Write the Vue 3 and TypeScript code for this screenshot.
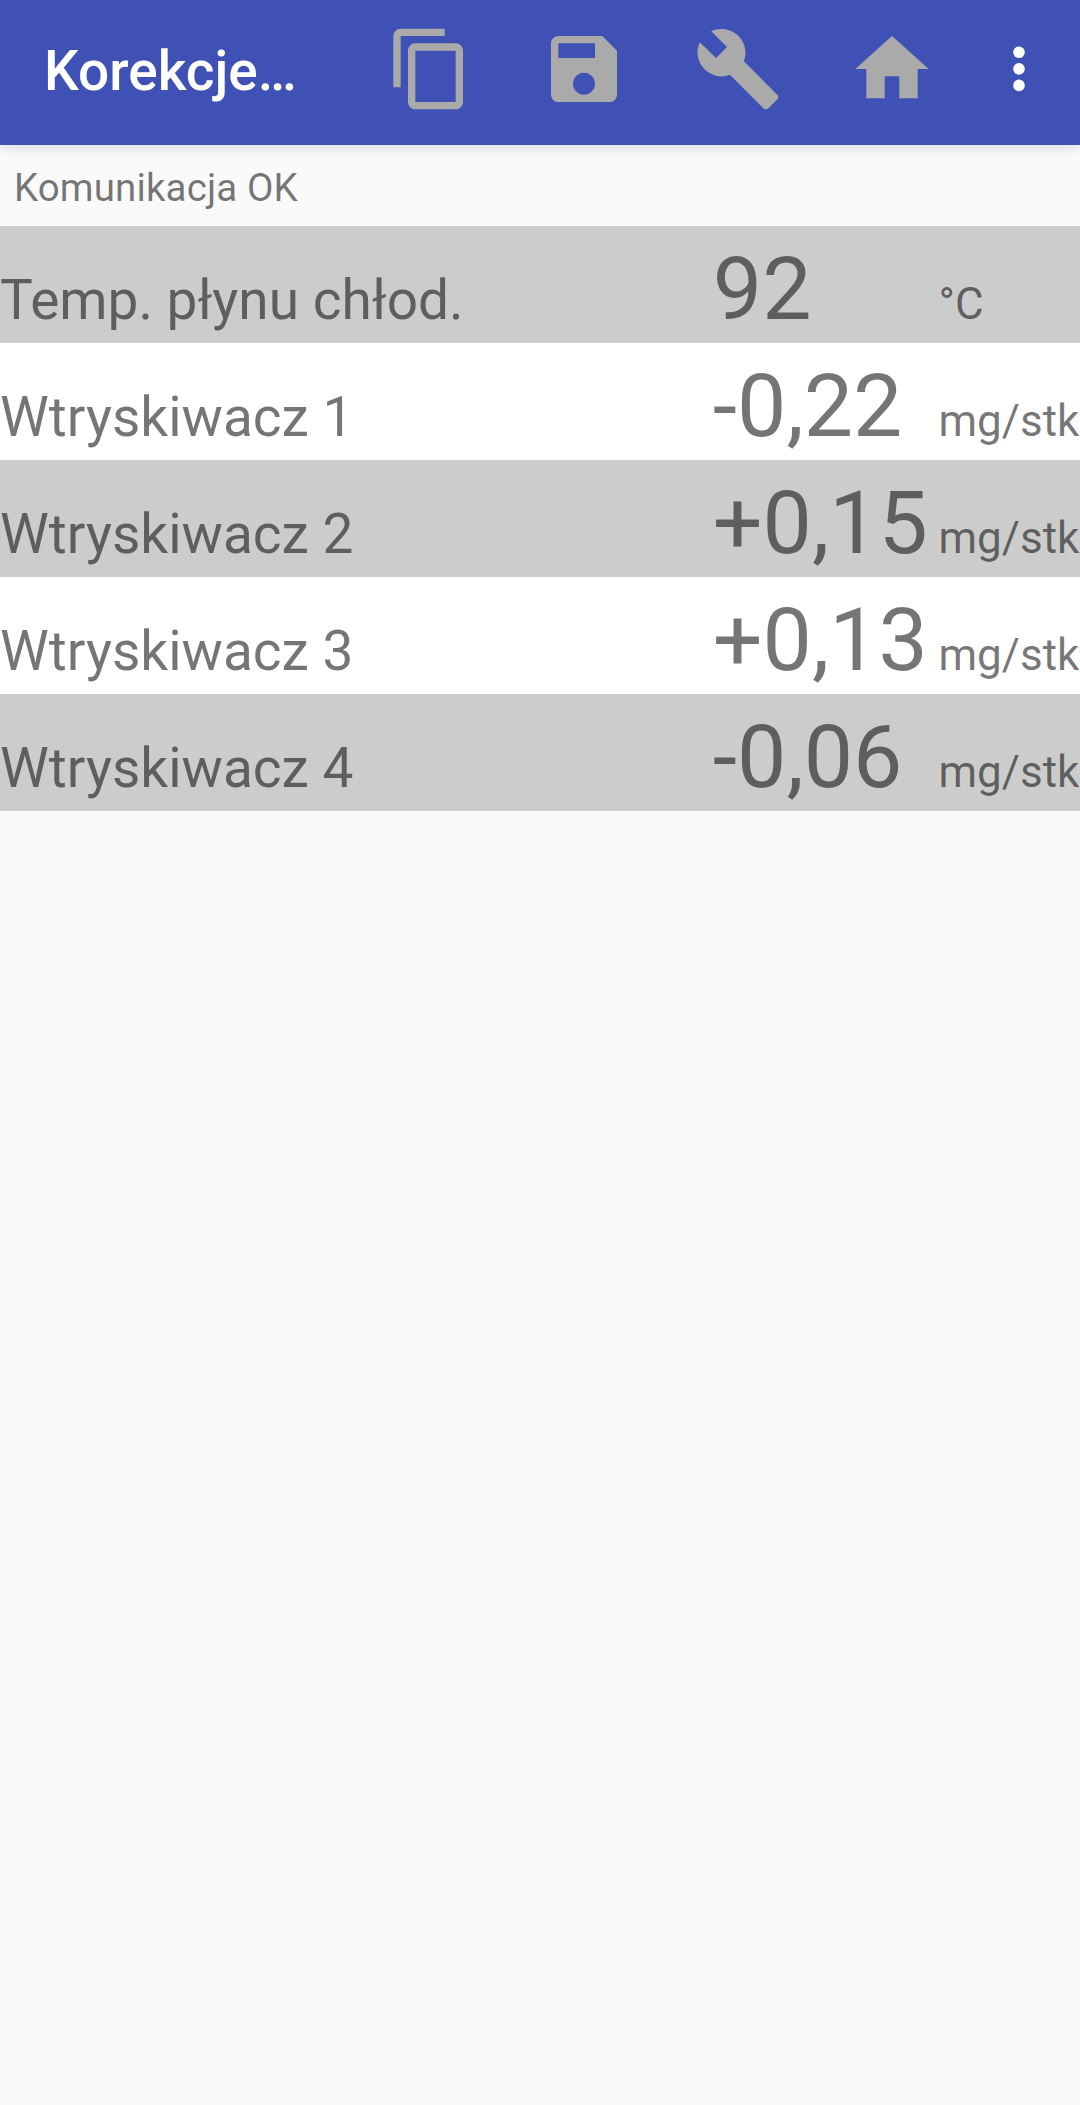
<script setup lang="ts">
interface Reading {
  label: string
  value: string
  unit: string
}

const readings: Reading[] = [
  { label: 'Temp. płynu chłod.', value: '92', unit: '°C' },
  { label: 'Wtryskiwacz 1', value: '-0,22', unit: 'mg/stk' },
  { label: 'Wtryskiwacz 2', value: '+0,15', unit: 'mg/stk' },
  { label: 'Wtryskiwacz 3', value: '+0,13', unit: 'mg/stk' },
  { label: 'Wtryskiwacz 4', value: '-0,06', unit: 'mg/stk' },
]

const actions = [
  {
    name: 'copy',
    path: 'M16 1H4c-1.1 0-2 .9-2 2v14h2V3h12V1zm3 4H8c-1.1 0-2 .9-2 2v14c0 1.1.9 2 2 2h11c1.1 0 2-.9 2-2V7c0-1.1-.9-2-2-2zm0 16H8V7h11v14z',
  },
  {
    name: 'save',
    path: 'M17 3H5c-1.11 0-2 .9-2 2v14c0 1.1.89 2 2 2h14c1.1 0 2-.9 2-2V7l-4-4zm-5 16c-1.66 0-3-1.34-3-3s1.34-3 3-3 3 1.34 3 3-1.34 3-3 3zm3-10H5V5h10v4z',
  },
  {
    name: 'build',
    path: 'M22.7 19l-9.1-9.1c.9-2.3.4-5-1.5-6.9-2-2-5-2.4-7.4-1.3L9 6 6 9 1.6 4.7C.4 7.1.9 10.1 2.9 12.1c1.9 1.9 4.6 2.4 6.9 1.5l9.1 9.1c.4.4 1 .4 1.4 0l2.3-2.3c.5-.4.5-1.1.1-1.4z',
  },
  { name: 'home', path: 'M10 20v-6h4v6h5v-8h3L12 3 2 12h3v8z' },
]
</script>

<template>
  <div class="screen">
    <header class="bar">
      <h1 class="title">Korekcje…</h1>
      <button v-for="a in actions" :key="a.name" class="action" :aria-label="a.name">
        <svg viewBox="0 0 24 24" width="88" height="88"><path :d="a.path" /></svg>
      </button>
      <button class="more" aria-label="menu">
        <svg viewBox="0 0 12 46" width="12" height="46">
          <circle cx="6" cy="6.3" r="5.8" />
          <circle cx="6" cy="22.9" r="5.8" />
          <circle cx="6" cy="39.4" r="5.8" />
        </svg>
      </button>
    </header>
    <p class="status">Komunikacja OK</p>
    <main class="list">
      <div v-for="r in readings" :key="r.label" class="row">
        <span class="label">{{ r.label }}</span>
        <span class="value">{{ r.value }}</span>
        <span class="unit">{{ r.unit }}</span>
      </div>
    </main>
  </div>
</template>

<style>
body {
  margin: 0;
  background: #fafafa;
}
</style>

<style scoped>
.screen {
  width: 1080px;
  height: 2105px;
  overflow: hidden;
  background: #fafafa;
  font-family: Roboto, "Liberation Sans", sans-serif;
  color: rgba(0, 0, 0, 0.54);
}
.bar {
  box-sizing: border-box;
  height: 145.33px;
  display: flex;
  align-items: flex-start;
  background: #3f51b5;
  box-shadow: 0 4px 10px rgba(0, 0, 0, 0.11);
}
.title {
  box-sizing: border-box;
  flex: none;
  width: 352.7px;
  margin: 0;
  padding: 39px 0 0 44px;
  font-size: 55px;
  line-height: 65px;
  font-weight: 500;
  color: #fff;
  white-space: nowrap;
}
.action,
.more {
  flex: none;
  border: 0;
  margin: 0;
  background: none;
}
.action {
  width: 154px;
  padding: 24.5px 33px 0;
}
.action svg,
.more svg {
  display: block;
}
.action path {
  fill: #aaa;
}
.more {
  padding: 45.5px 0 0 44px;
}
.more circle {
  fill: #fff;
}
.status {
  box-sizing: border-box;
  height: 81px;
  margin: 0;
  padding: 20px 0 0 14px;
  font-size: 38.5px;
  line-height: 45px;
  letter-spacing: 0.12px;
}
.row {
  box-sizing: border-box;
  height: 117px;
  padding-top: 11.4px;
  display: flex;
  align-items: baseline;
  background: #fff;
  white-space: nowrap;
}
.row:nth-child(odd) {
  background: #ccc;
}
.label {
  flex: none;
  width: 712.8px;
  font-size: 55px;
  line-height: 64px;
}
.value {
  flex: none;
  width: 225.7px;
  font-size: 87.8px;
  line-height: 103px;
}
.unit {
  font-size: 44px;
  line-height: 52px;
}
</style>
